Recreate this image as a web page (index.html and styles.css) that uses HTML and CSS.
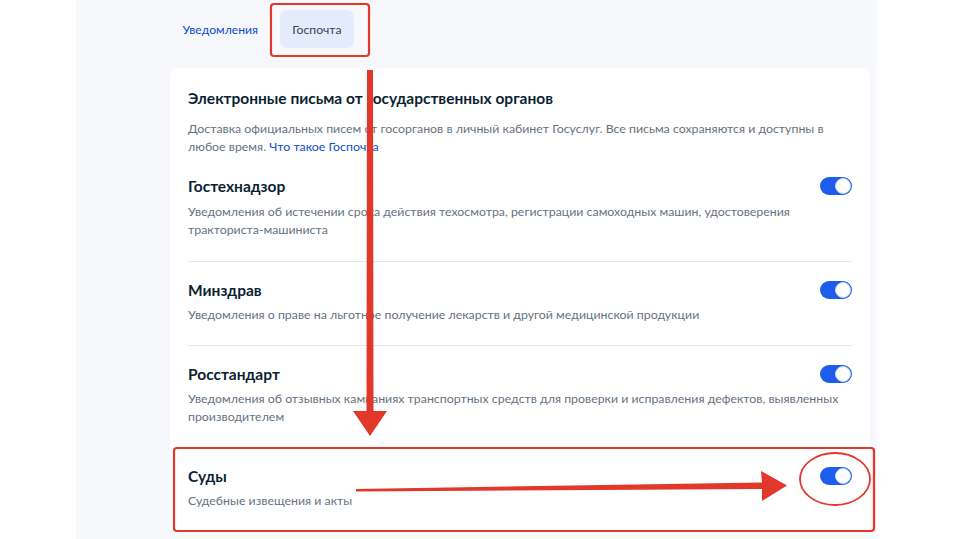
FILE: index.html
```html
<!DOCTYPE html>
<html lang="ru">
<head>
<meta charset="utf-8">
<title>Госпочта</title>
<link rel="stylesheet" href="styles.css">
</head>
<body>
<div class="page">
  <div class="panel">
    <nav class="tabs">
      <a class="tab">Уведомления</a>
      <a class="tab tab-active">Госпочта</a>
    </nav>
    <section class="card">
      <div class="row row-first">
        <h2 class="card-title">Электронные письма от государственных органов</h2>
        <p class="intro">Доставка официальных писем от госорганов в личный кабинет Госуслуг. Все письма сохраняются и доступны в любое время. <a class="link">Что такое Госпочта</a></p>
        <div class="item">
          <div class="item-head">
            <h3 class="item-title">Гостехнадзор</h3>
            <span class="toggle"><span class="knob"></span></span>
          </div>
          <p class="item-desc">Уведомления об истечении срока действия техосмотра, регистрации самоходных машин, удостоверения тракториста-машиниста</p>
        </div>
      </div>
      <div class="row">
        <div class="item">
          <div class="item-head">
            <h3 class="item-title">Минздрав</h3>
            <span class="toggle"><span class="knob"></span></span>
          </div>
          <p class="item-desc">Уведомления о праве на льготное получение лекарств и другой медицинской продукции</p>
        </div>
      </div>
      <div class="row">
        <div class="item">
          <div class="item-head">
            <h3 class="item-title">Росстандарт</h3>
            <span class="toggle"><span class="knob"></span></span>
          </div>
          <p class="item-desc">Уведомления об отзывных кампаниях транспортных средств для проверки и исправления дефектов, выявленных производителем</p>
        </div>
      </div>
      <div class="row">
        <div class="item">
          <div class="item-head">
            <h3 class="item-title">Суды</h3>
            <span class="toggle"><span class="knob"></span></span>
          </div>
          <p class="item-desc">Судебные извещения и акты</p>
        </div>
      </div>
    </section>
  </div>
  <svg class="annotations" width="959" height="539" viewBox="0 0 959 539" xmlns="http://www.w3.org/2000/svg">
    <rect x="271" y="4" width="98" height="52" rx="3" fill="none" stroke="#e2372b" stroke-width="2.2"/>
    <rect x="174" y="448" width="700" height="83" rx="3" fill="none" stroke="#e2372b" stroke-width="2.2"/>
    <polygon points="367,70 373,70 373.5,411 387,411 370,436 353,411 366.5,411" fill="#e2372b"/>
    <polygon points="356,489 762,482.5 761,471 787,485.5 762,501 762,489 356,491.5" fill="#e2372b"/>
    <ellipse cx="835" cy="479" rx="35" ry="26" fill="none" stroke="#e2372b" stroke-width="1.8"/>
  </svg>
</div>
</body>
</html>
```
FILE: styles.css
```css
* { box-sizing: border-box; }
html, body {
  margin: 0;
  padding: 0;
  background: #ffffff;
  font-family: Lato, "Noto Sans", "Liberation Sans", sans-serif;
}
.page {
  position: relative;
  width: 959px;
  height: 539px;
  overflow: hidden;
}
.panel {
  margin-left: 76px;
  width: 801px;
  height: 539px;
  background: #f7f8fb;
  padding: 10px 0 0 94px;
}
.tabs {
  display: flex;
  gap: 9px;
  height: 38px;
  align-items: center;
}
.tab {
  display: flex;
  align-items: center;
  height: 38px;
  padding: 0 12.5px;
  border-radius: 7px;
  font-size: 12.2px;
  color: #0d4cd3;
}
.tab-active {
  background: #e4ebfb;
  color: #3a4450;
}
.card {
  margin-top: 20px;
  width: 700px;
  background: #ffffff;
  border-radius: 8px 8px 0 0;
  padding: 0 18px;
}
.row {
  padding: 18px 0 20.5px;
  border-top: 1px solid #e3e6ea;
}
.row-first {
  border-top: none;
  padding-top: 20px;
  padding-bottom: 22px;
}
.card-title {
  margin: 0;
  font-size: 15.5px;
  line-height: 20px;
  font-weight: 700;
  color: #0b1f33;
}
.intro {
  margin: 12px 0 20px;
  font-size: 12.35px;
  line-height: 18px;
  color: #66727f;
  padding-right: 10px;
}
.link { color: #0d4cd3; }
.item-head {
  display: flex;
  align-items: center;
  justify-content: space-between;
  gap: 10px;
}
.item-title {
  margin: 0;
  font-size: 15.5px;
  line-height: 20px;
  font-weight: 700;
  color: #0b1f33;
}
.item-desc {
  margin: 6.5px 0 0;
  font-size: 12.35px;
  line-height: 18px;
  color: #66727f;
}
.toggle {
  flex: none;
  width: 32px;
  height: 18px;
  border-radius: 9px;
  background: #1d5deb;
  display: flex;
  justify-content: flex-end;
  align-items: center;
  padding: 1px;
}
.knob {
  width: 16px;
  height: 16px;
  border-radius: 50%;
  background: #ffffff;
  border: 1px solid #c9d7f7;
}
.annotations {
  position: absolute;
  left: 0;
  top: 0;
  pointer-events: none;
}
```
